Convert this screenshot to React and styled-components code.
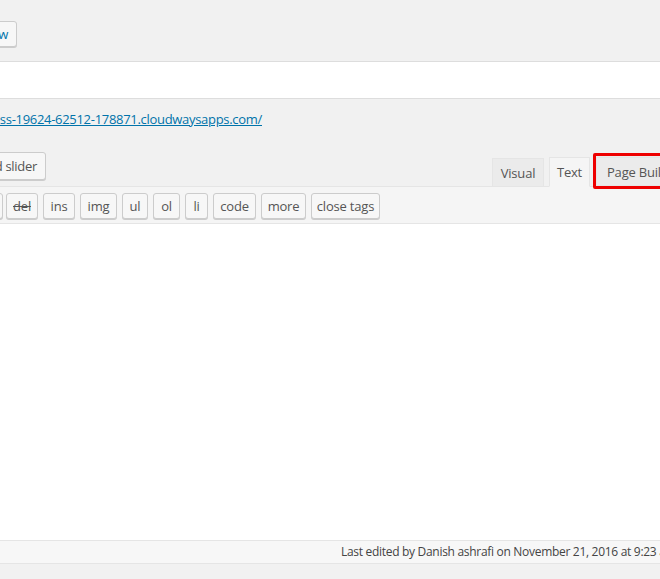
import React from "react"
import styled, { createGlobalStyle } from "styled-components"

const GlobalStyle = createGlobalStyle`
  html, body {
    margin: 0;
    padding: 0;
    background: #f1f1f1;
    overflow: hidden;
  }
  body {
    font-family: "Open Sans", "Noto Sans", "Liberation Sans", sans-serif;
    color: #555;
  }
`

const quicktags = [
  { label: "b-quote", w: 58 },
  { label: "del", w: 32, strike: true },
  { label: "ins", w: 32 },
  { label: "img", w: 37 },
  { label: "ul", w: 26 },
  { label: "ol", w: 27 },
  { label: "li", w: 23 },
  { label: "code", w: 43 },
  { label: "more", w: 45 },
  { label: "close tags", w: 69 },
]

const App = () => {
  return (
    <Page>
      <GlobalStyle />
      <TopBar>
        <ClipLeft $w={17}>
          <WpButton $h={26} $blue>Preview</WpButton>
        </ClipLeft>
      </TopBar>

      <TitleInput />

      <Permalink>
        <ClipLeft $w={262}>
          <PermalinkLink href="#">
            http://wordpress-19624-62512-178871.cloudwaysapps.com/
          </PermalinkLink>
        </ClipLeft>
      </Permalink>

      <ToolsRow>
        <ClipLeft $w={46}>
          <WpButton $h={28} $top={12}>Add slider</WpButton>
        </ClipLeft>
        <Tabs>
          <Tab $w={52}>Visual</Tab>
          <Tab $w={41} $active>
            Text
          </Tab>
          <Highlight>
            <Tab $w={97} $flush>
              Page Builder
            </Tab>
          </Highlight>
        </Tabs>
      </ToolsRow>

      <Toolbar>
        {quicktags.map((tag, i) => (
          <TagSlot key={tag.label} $lead={i === 0}>
            <TagButton $w={tag.w} $strike={tag.strike}>
              {tag.label}
            </TagButton>
          </TagSlot>
        ))}
      </Toolbar>

      <TextArea />

      <StatusBar>
        Last edited by Danish ashrafi on November 21, 2016 at 9:23 am
      </StatusBar>
    </Page>
  )
}

export default App

const Page = styled.div`
  width: 760px;
  display: flex;
  flex-direction: column;
`

const ClipLeft = styled.div`
  width: ${(p) => p.$w}px;
  display: flex;
  justify-content: flex-end;
  flex-shrink: 0;
  white-space: nowrap;
`

const TopBar = styled.div`
  height: 61px;
  display: flex;
  align-items: flex-start;
  padding-top: 21px;
  box-sizing: border-box;
`

const WpButton = styled.button`
  flex-shrink: 0;
  height: ${(p) => p.$h}px;
  margin-top: ${(p) => p.$top || 0}px;
  padding: 0 8px;
  font-family: inherit;
  font-size: 13px;
  letter-spacing: -0.3px;
  line-height: ${(p) => p.$h - 2}px;
  color: ${(p) => (p.$blue ? "#0073aa" : "#555")};
  background: #f7f7f7;
  border: 1px solid #ccc;
  border-radius: 3px;
  box-shadow: 0 1px 0 #ccc;
  white-space: nowrap;
`

const TitleInput = styled.div`
  height: 36px;
  background: #fff;
  border-top: 1px solid #ddd;
  border-bottom: 1px solid #ddd;
`

const Permalink = styled.div`
  height: 41px;
  padding-top: 10px;
  box-sizing: border-box;
  display: flex;
`

const PermalinkLink = styled.a`
  font-size: 13px;
  letter-spacing: -0.3px;
  line-height: 20px;
  color: #0073aa;
  text-decoration: underline;
  flex-shrink: 0;
`

const ToolsRow = styled.div`
  height: 46px;
  display: flex;
  align-items: flex-start;
  justify-content: space-between;
  position: relative;
  z-index: 1;
`

const Tabs = styled.div`
  display: flex;
  align-items: flex-end;
  align-self: flex-end;
  margin-right: 64px;
  margin-bottom: -1px;
`

const Tab = styled.div`
  box-sizing: border-box;
  width: ${(p) => p.$w}px;
  height: ${(p) => (p.$active ? 30 : 29)}px;
  margin-left: ${(p) => (p.$flush ? 0 : 5)}px;
  padding: 0 0 0 ${(p) => (p.$flush ? 10 : 0)}px;
  text-align: ${(p) => (p.$flush ? "left" : "center")};
  font-size: 13px;
  letter-spacing: -0.2px;
  line-height: 29px;
  color: #555;
  background: ${(p) => (p.$active ? "#f5f5f5" : "#ebebeb")};
  border: 1px solid #e5e5e5;
  border-bottom: 1px solid ${(p) => (p.$active ? "#f5f5f5" : "#e5e5e5")};
  white-space: nowrap;
`

const Highlight = styled.div`
  margin-left: 3px;
  margin-bottom: -2px;
  border: 3px solid #ee0000;
  border-radius: 2px;
  padding-top: 1px;
  background: #ebebeb;
`

const Toolbar = styled.div`
  height: 30px;
  display: flex;
  align-items: flex-start;
  padding-top: 6px;
  background: #f5f5f5;
  border-top: 1px solid #e5e5e5;
  border-bottom: 1px solid #e5e5e5;
`

const TagSlot = styled.div`
  flex-shrink: 0;
  display: flex;
  justify-content: flex-end;
  width: ${(p) => (p.$lead ? "3px" : "auto")};
  margin-left: ${(p) => (p.$lead ? 0 : 5)}px;
  ${(p) => (p.$lead ? "margin-right: -2px;" : "")}
`

const TagButton = styled.button`
  flex-shrink: 0;
  box-sizing: border-box;
  width: ${(p) => p.$w}px;
  height: 26px;
  padding: 0;
  font-family: inherit;
  font-size: 13px;
  letter-spacing: -0.2px;
  line-height: 24px;
  color: #555;
  text-decoration: ${(p) => (p.$strike ? "line-through" : "none")};
  background: #f7f7f7;
  border: 1px solid #ccc;
  border-radius: 3px;
  box-shadow: 0 1px 0 #ccc;
  white-space: nowrap;
`

const TextArea = styled.div`
  height: 316px;
  background: #fff;
`

const StatusBar = styled.div`
  height: 22px;
  padding-left: 341px;
  font-size: 12px;
  letter-spacing: -0.3px;
  line-height: 22px;
  color: #444;
  background: #f7f7f7;
  border-top: 1px solid #e5e5e5;
  border-bottom: 1px solid #e5e5e5;
  white-space: nowrap;
`
